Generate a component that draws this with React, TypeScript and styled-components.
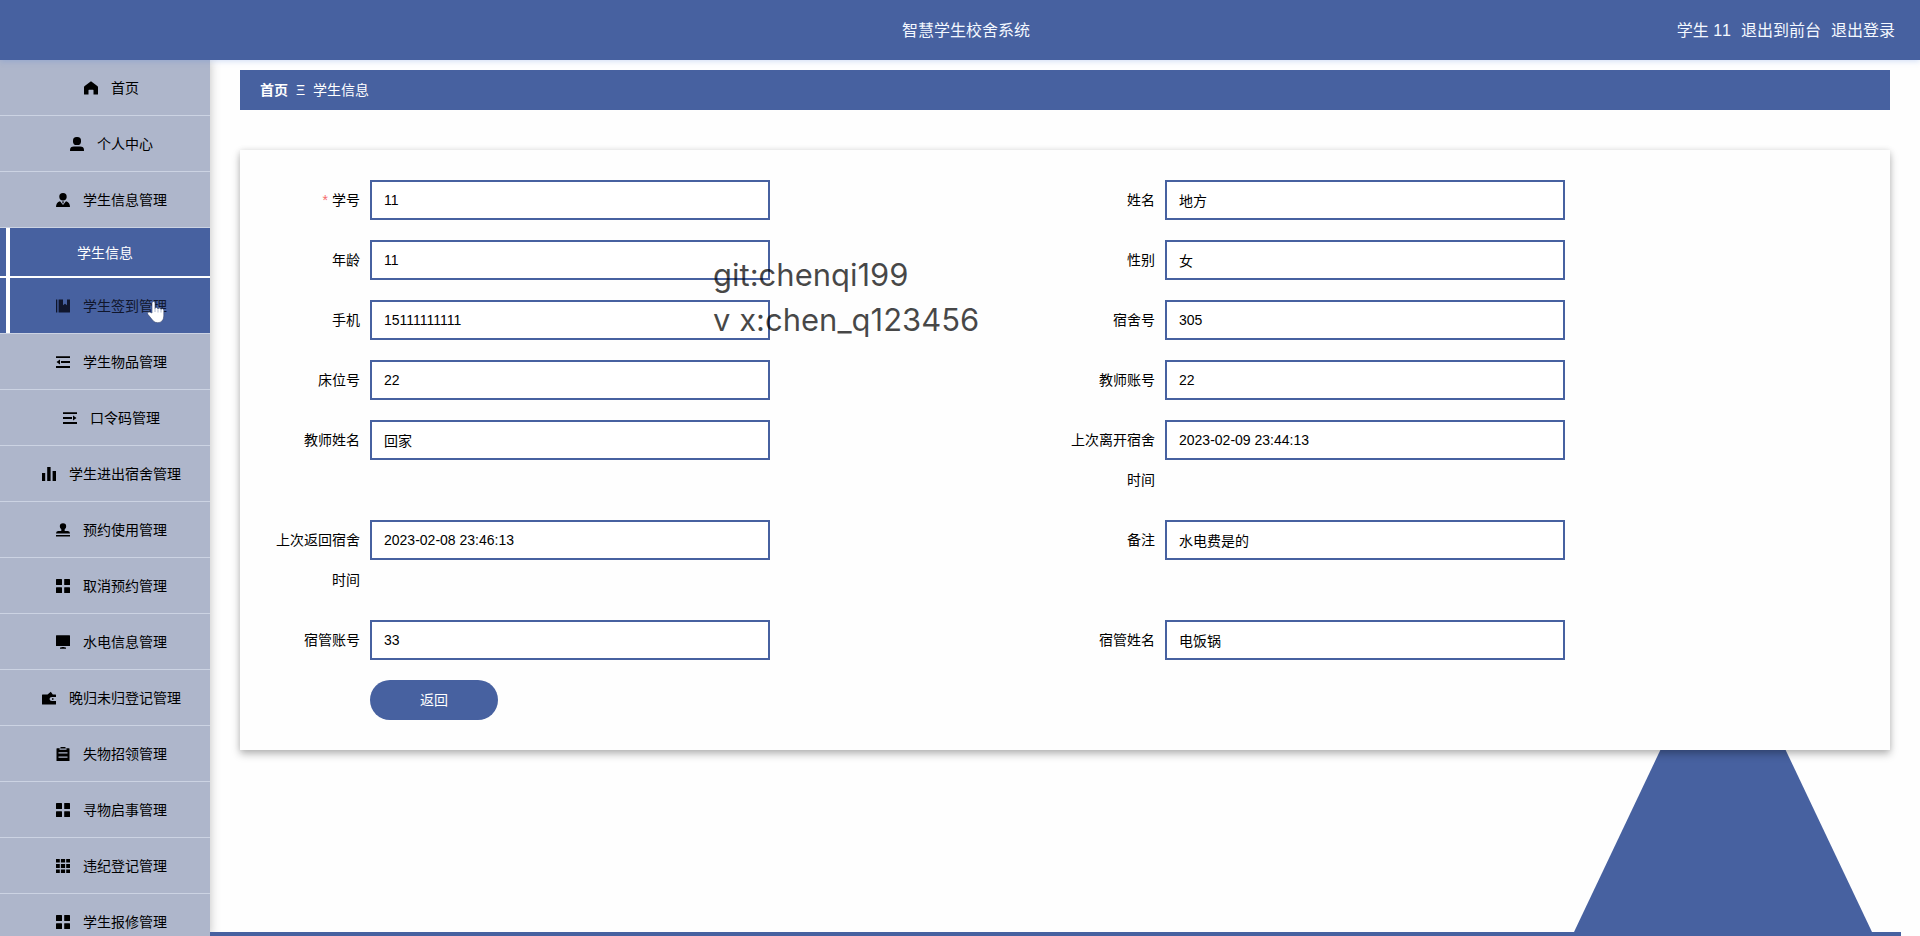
import React from "react";
import styled, { createGlobalStyle, css } from "styled-components";

const blue = "#4761a0";
const sans = `"Liberation Sans", "Noto Sans CJK SC", sans-serif`;

const GlobalStyle = createGlobalStyle`
  *, *::before, *::after { box-sizing: border-box; }
  body { margin: 0; background: #fefefe; color: #000; font: 14px/20px ${sans}; }
  a { color: inherit; text-decoration: none; }
`;

const Page = styled.div`
  display: flex;
  flex-direction: column;
  height: 100vh;
  overflow: hidden;
`;

const Header = styled.header`
  position: relative;
  z-index: 1;
  display: grid;
  grid-template-columns: 1fr auto 1fr;
  align-items: center;
  flex: none;
  height: 60px;
  padding: 2px 25px 0 37px;
  background: ${blue};
  color: #f4f8ff;
  font-size: 16px;
  font-kerning: none;
  box-shadow: 0 1px 6px rgba(64, 120, 220, 0.25);
`;

const Title = styled.h1`
  grid-column: 2;
  margin: 0;
  font-size: 16px;
  font-weight: 400;
`;

const Account = styled.div`
  display: flex;
  justify-content: flex-end;
  gap: 10px;
`;

const Body = styled.div`
  display: flex;
  flex: 1;
  min-height: 0;
`;

const Sidebar = styled.nav`
  position: relative;
  flex: none;
  width: 210px;
  overflow: hidden;
  background: #aeb6cb;
  box-shadow: 0 0 10px rgba(0, 0, 0, 0.25);
`;

const marked = css`
  background: linear-gradient(90deg, ${blue} 6px, #fff 6px, #fff 10px, ${blue} 10px);
`;

const MenuItem = styled.a<{ $hovered?: boolean }>`
  display: flex;
  align-items: center;
  justify-content: center;
  height: 56px;
  border-bottom: 1px solid #ccd3e3;
  color: ${(p) => (p.$hovered ? "#10162c" : "#000")};
  ${(p) => p.$hovered && marked}
`;

const SubItem = styled.a`
  display: flex;
  align-items: center;
  justify-content: center;
  height: 50px;
  padding-top: 2px;
  border-bottom: 2px solid #fff;
  color: #fff;
  ${marked}
`;

const MenuIcon = styled.svg`
  flex: none;
  width: 14px;
  height: 14px;
  margin: 0 13px;
  fill: currentColor;
`;

const Main = styled.main`
  position: relative;
  display: flex;
  flex-direction: column;
  flex: 1;
  min-width: 0;
  padding-top: 10px;
`;

const Breadcrumb = styled.div`
  display: flex;
  align-items: center;
  flex: none;
  gap: 8px;
  height: 40px;
  margin: 0 30px 40px;
  padding: 0 20px;
  background: ${blue};
  color: #fff;
`;

const Card = styled.form`
  position: relative;
  flex: none;
  margin: 0 30px;
  padding: 30px;
  background: #fefefe;
  box-shadow: 0 4px 8px rgba(0, 0, 0, 0.28), 0 0 6px rgba(0, 0, 0, 0.08);
`;

const Fields = styled.div`
  display: grid;
  grid-template-columns: 1fr 1fr;
  row-gap: 20px;
`;

const Field = styled.div`
  display: flex;
  align-items: flex-start;
`;

const Label = styled.label<{ $required?: boolean }>`
  flex: none;
  width: 100px;
  padding-right: 10px;
  line-height: 40px;
  text-align: right;
  ${(p) =>
    p.$required &&
    css`
      &::before {
        content: "*";
        margin-right: 4px;
        color: #f56c6c;
      }
    `}
`;

const TextInput = styled.input`
  width: 400px;
  height: 40px;
  padding: 0 12px;
  border: 2px solid ${blue};
  border-radius: 0;
  background: #fff;
  color: #000;
  font: 14px/20px ${sans};
  outline: none;
`;

const Actions = styled.div`
  padding: 20px 0 0 100px;
`;

const BackButton = styled.button`
  display: block;
  width: 128px;
  height: 40px;
  border: 0;
  border-radius: 20px;
  background: ${blue};
  color: #fff;
  font: 14px/20px ${sans};
  cursor: pointer;
`;

const Triangle = styled.div`
  position: absolute;
  right: 48px;
  bottom: 4px;
  width: 298px;
  height: 314px;
  background: ${blue};
  clip-path: polygon(50% 0, 100% 100%, 0 100%);
`;

const BottomBar = styled.div`
  flex: none;
  height: 4px;
  margin: auto 19px 0 0;
  background: ${blue};
`;

const Watermark = styled.div`
  position: absolute;
  z-index: 2;
  top: 252px;
  left: 713px;
  color: rgba(0, 0, 0, 0.72);
  font: 31px/45px Inter, sans-serif;
  white-space: pre;
  pointer-events: none;
`;

const Pointer = styled.svg`
  position: absolute;
  z-index: 3;
  top: 300px;
  left: 146px;
  width: 20px;
  height: 24px;
  pointer-events: none;
`;

const icons: Record<string, React.ReactNode> = {
  home: <path d="M7 .3 13.300 5q.7.5.7 1.300V13q0 .5-.5.5H9.500V9.300q0-.5-.5-.5H5q-.5 0-.5.5v4.200H.5Q0 13.500 0 13V6.300Q0 5.500.7 5z" />,
  user: (
    <>
      <rect x="3" y="0" width="8" height="8" rx="3.600" />
      <path d="M4 9.600h6q4 0 4 3.400v.5q0 .5-.5.5H.5Q0 14 0 13.500V13q0-3.400 4-3.400z" />
    </>
  ),
  custom: (
    <>
      <circle cx="7" cy="3.700" r="3.700" />
      <path d="M4 8.200 7 12l3-3.800Q14 9.300 14 14H0Q0 9.300 4 8.200z" />
      <path d="M6 8.500h2L7.500 9.700 7 11 6.500 9.700z" />
    </>
  ),
  notebook: <path d="M0 .5h1.300v13H0zM2.600.5H7v5.700l2-1.500 2 1.500V.5h3v12.500q0 .5-.5.5H2.600z" />,
  fold: <path d="M0 1.200h14v1.900H0zM5 6.100h9v1.900H5zM4 4.500v5L.5 7zM0 11h14v1.900H0z" />,
  unfold: <path d="M0 1.200h14v1.900H0zM0 6.100h9v1.900H0zM10 4.500v5L13.500 7zM0 11h14v1.900H0z" />,
  data: <path d="M0 6h3.200v8H0zM5.200 0h3.400v14H5.200zM10.600 4H14v10h-3.400z" />,
  stamp: <path d="M7 .2q3.200 0 3.200 3Q10.200 5 8.700 6.200V8H12q2 0 2 2.500H0Q0 8 2 8h3.300V6.200Q3.800 5 3.800 3.200 3.800.2 7 .2zM0 12h14v1.600H0z" />,
  menu: (
    <>
      <rect x="0" y="0" width="6" height="6" rx=".5" />
      <rect x="8.200" y="0" width="5.800" height="6" rx=".5" />
      <rect x="0" y="8.200" width="6" height="5.800" rx=".5" />
      <rect x="8.200" y="8.200" width="5.800" height="5.800" rx=".5" />
    </>
  ),
  platform: <path d="M.5.3h13q.5 0 .5.5v10.200H0V.8Q0 .3.500.3zM5.500 12h3v.5h1.500V13.700h-6v-1.200h1.500z" />,
  wallet: (
    <path
      fillRule="evenodd"
      d="M.5 3.500h5L8.800.7 10.800 3.500H13.500q.5 0 .5.5v2h-4q-2.500 0-2.500 2t2.500 2h4v3q0 .5-.5.5H.5Q0 13.500 0 13V4q0-.5.5-.5zM10 7.200h1.500v1.500H10z"
    />
  ),
  order: (
    <path
      fillRule="evenodd"
      d="M4.500 0h5v1.200H13q.5 0 .5.500V14H.5V1.700q0-.5.5-.5h3.500zM3.500 1.600v1.200h7V1.600zM2.500 5.200v1.400h9V5.200zM2.500 9.400v1.400h9V9.400z"
    />
  ),
  grid: <path d="M0 0h3.800v3.600H0zM4.900 0h4.200v3.600H4.900zM10.200 0H14v3.600h-3.800zM0 4.900h3.800v4.200H0zM4.900 4.900h4.200v4.200H4.900zM10.200 4.900H14v4.200h-3.800zM0 10.400h3.800V14H0zM4.900 10.400h4.200V14H4.900zM10.200 10.400H14V14h-3.800z" />,
};

type Item = { icon: string; text: string; children?: string[]; hovered?: boolean };

const menu: Item[] = [
  { icon: "home", text: "首页" },
  { icon: "user", text: "个人中心" },
  { icon: "custom", text: "学生信息管理", children: ["学生信息"] },
  { icon: "notebook", text: "学生签到管理", hovered: true },
  { icon: "fold", text: "学生物品管理" },
  { icon: "unfold", text: "口令码管理" },
  { icon: "data", text: "学生进出宿舍管理" },
  { icon: "stamp", text: "预约使用管理" },
  { icon: "menu", text: "取消预约管理" },
  { icon: "platform", text: "水电信息管理" },
  { icon: "wallet", text: "晚归未归登记管理" },
  { icon: "order", text: "失物招领管理" },
  { icon: "menu", text: "寻物启事管理" },
  { icon: "grid", text: "违纪登记管理" },
  { icon: "menu", text: "学生报修管理" },
];

const fields = [
  { id: "studentNo", label: "学号", value: "11", required: true },
  { id: "name", label: "姓名", value: "地方" },
  { id: "age", label: "年龄", value: "11" },
  { id: "gender", label: "性别", value: "女" },
  { id: "phone", label: "手机", value: "15111111111" },
  { id: "dormNo", label: "宿舍号", value: "305" },
  { id: "bedNo", label: "床位号", value: "22" },
  { id: "teacherNo", label: "教师账号", value: "22" },
  { id: "teacherName", label: "教师姓名", value: "回家" },
  { id: "lastLeft", label: "上次离开宿舍时间", value: "2023-02-09 23:44:13" },
  { id: "lastReturned", label: "上次返回宿舍时间", value: "2023-02-08 23:46:13" },
  { id: "remark", label: "备注", value: "水电费是的" },
  { id: "keeperNo", label: "宿管账号", value: "33" },
  { id: "keeperName", label: "宿管姓名", value: "电饭锅" },
];

export default function App() {
  return (
    <Page>
      <GlobalStyle />
      <Header>
        <Title>智慧学生校舍系统</Title>
        <Account>
          <span>学生 11</span>
          <a href="#front">退出到前台</a>
          <a href="#logout">退出登录</a>
        </Account>
      </Header>
      <Body>
        <Sidebar>
          {menu.map((item) => (
            <React.Fragment key={item.text}>
              <MenuItem href="#menu" $hovered={item.hovered}>
                <MenuIcon viewBox="0 0 14 14" aria-hidden="true">
                  {icons[item.icon]}
                </MenuIcon>
                {item.text}
              </MenuItem>
              {item.children?.map((child) => (
                <SubItem key={child} href="#submenu">
                  {child}
                </SubItem>
              ))}
            </React.Fragment>
          ))}
        </Sidebar>
        <Main>
          <Triangle />
          <Breadcrumb>
            <b>首页</b>
            <span>Ξ</span>
            <span>学生信息</span>
          </Breadcrumb>
          <Card>
            <Fields>
              {fields.map((f) => (
                <Field key={f.id}>
                  <Label htmlFor={f.id} $required={f.required}>
                    {f.label}
                  </Label>
                  <TextInput id={f.id} type="text" value={f.value} readOnly />
                </Field>
              ))}
            </Fields>
            <Actions>
              <BackButton type="button">返回</BackButton>
            </Actions>
          </Card>
          <BottomBar />
        </Main>
      </Body>
      <Watermark>{"git:chenqi199\nv x:chen_q123456"}</Watermark>
      <Pointer viewBox="0 0 20 24" aria-hidden="true">
        <path
          d="M6 13V3q0-1.600 1.500-1.600T9 3v5.500q0-1 1.400-1T12 9q.2-1 1.400-1T15 9.500q.3-.8 1.300-.8 1.500 0 1.500 1.600V16q0 3.500-2 5.200-1.500 1.500-4 1.500-3 0-4.500-1.700L2 14.500q-1-1.400 0-2.200 1-.8 2.200 0z"
          fill="#fff"
          stroke="#35456f"
          strokeWidth=".6"
        />
        <path d="M9 8.500V12M12 9.300V12.500M15 10V12.500" stroke="#9aa5c0" strokeWidth=".8" fill="none" />
      </Pointer>
    </Page>
  );
}
